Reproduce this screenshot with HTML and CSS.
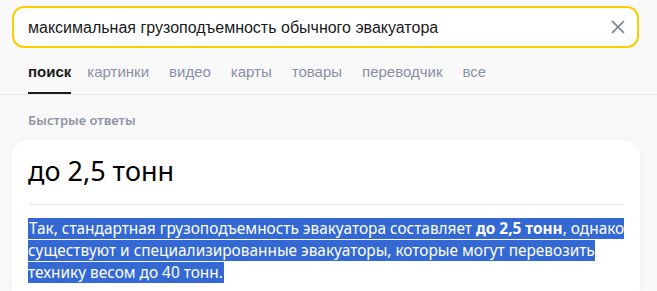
FILE: index.html
```html
<!DOCTYPE html>
<html lang="ru">
<head>
<meta charset="utf-8">
<title>Поиск</title>
<link rel="stylesheet" href="styles.css">
</head>
<body>
<header class="header">
  <div class="search">
    <div class="search__text">максимальная грузоподъемность обычного эвакуатора</div>
    <button class="search__clear" aria-label="Очистить">
      <svg width="14" height="14" viewBox="0 0 14 14"><path d="M1.5 1.5L12.5 12.5M12.5 1.5L1.5 12.5" stroke="#8b909c" stroke-width="1.8" stroke-linecap="round"/></svg>
    </button>
  </div>
  <nav class="tabs">
    <span class="tab tab--active">поиск</span>
    <span class="tab">картинки</span>
    <span class="tab">видео</span>
    <span class="tab">карты</span>
    <span class="tab">товары</span>
    <span class="tab">переводчик</span>
    <span class="tab">все</span>
  </nav>
</header>
<main class="content">
  <div class="section-title">Быстрые ответы</div>
  <section class="card">
    <h1 class="card__title">до 2,5 тонн</h1>
    <div class="card__divider"></div>
    <p class="card__text"><span class="hl">Так, стандартная грузоподъемность эвакуатора составляет <b>до 2,5 тонн</b>, однако существуют и специализированные эвакуаторы, которые могут перевозить технику весом до 40 тонн.</span></p>
  </section>
</main>
</body>
</html>
```
FILE: styles.css
```css
html, body { margin: 0; padding: 0; }
body {
  background: #f9f9f9;
  font-family: "Noto Sans", Arial, sans-serif;
  color: #000;
  overflow: hidden;
}
.search {
  margin: 6px 18px 0 12px;
  height: 42px;
  box-sizing: border-box;
  border: 2px solid #ffcc00;
  border-radius: 12px;
  background: #fff;
  display: flex;
  align-items: center;
  padding: 0 12px 0 14px;
}
.search__text {
  flex: 1;
  font-family: "Liberation Sans", Arial, sans-serif;
  font-size: 16px;
  line-height: 20px;
  color: #1a1a1a;
  padding-top: 1px;
}
.search__clear {
  border: 0;
  background: none;
  padding: 0;
  width: 14px;
  height: 14px;
  display: flex;
  margin-right: 0;
}
.tabs {
  margin-top: 15px;
  display: flex;
  gap: 20px;
  padding-left: 28px;
  border-bottom: 1px solid #e8e9ec;
}
.tab {
  font-family: "Liberation Sans", Arial, sans-serif;
  font-size: 15px;
  line-height: 18px;
  color: #8a91a2;
  padding-bottom: 11px;
  border-bottom: 2px solid transparent;
}
.tab--active {
  color: #1a1a1a;
  font-weight: 700;
  border-bottom-color: #1a1a1a;
  margin-right: -4px;
}
.content { padding-top: 16px; }
.section-title {
  padding-left: 28px;
  font-size: 13px;
  line-height: 18px;
  font-weight: 600;
  color: #8e94a3;
}
.card {
  margin: 11px 17px 0 12px;
  background: #fff;
  border-radius: 16px;
  box-shadow: 0 0 8px rgba(0, 0, 0, 0.04);
  padding: 14px 16px 20px 16px;
}
.card__title {
  margin: 0;
  font-size: 27px;
  line-height: 34px;
  font-weight: 400;
  color: #000;
}
.card__divider {
  height: 1px;
  background: #e6e8ec;
  margin-top: 16px;
}
.card__text {
  margin: 13px -12px 0 0;
  font-size: 15.4px;
  line-height: 22px;
}
.hl {
  background: #3468d3;
  color: #fff;
  padding: 0 1px;
}
.hl b { font-weight: 700; }
```
